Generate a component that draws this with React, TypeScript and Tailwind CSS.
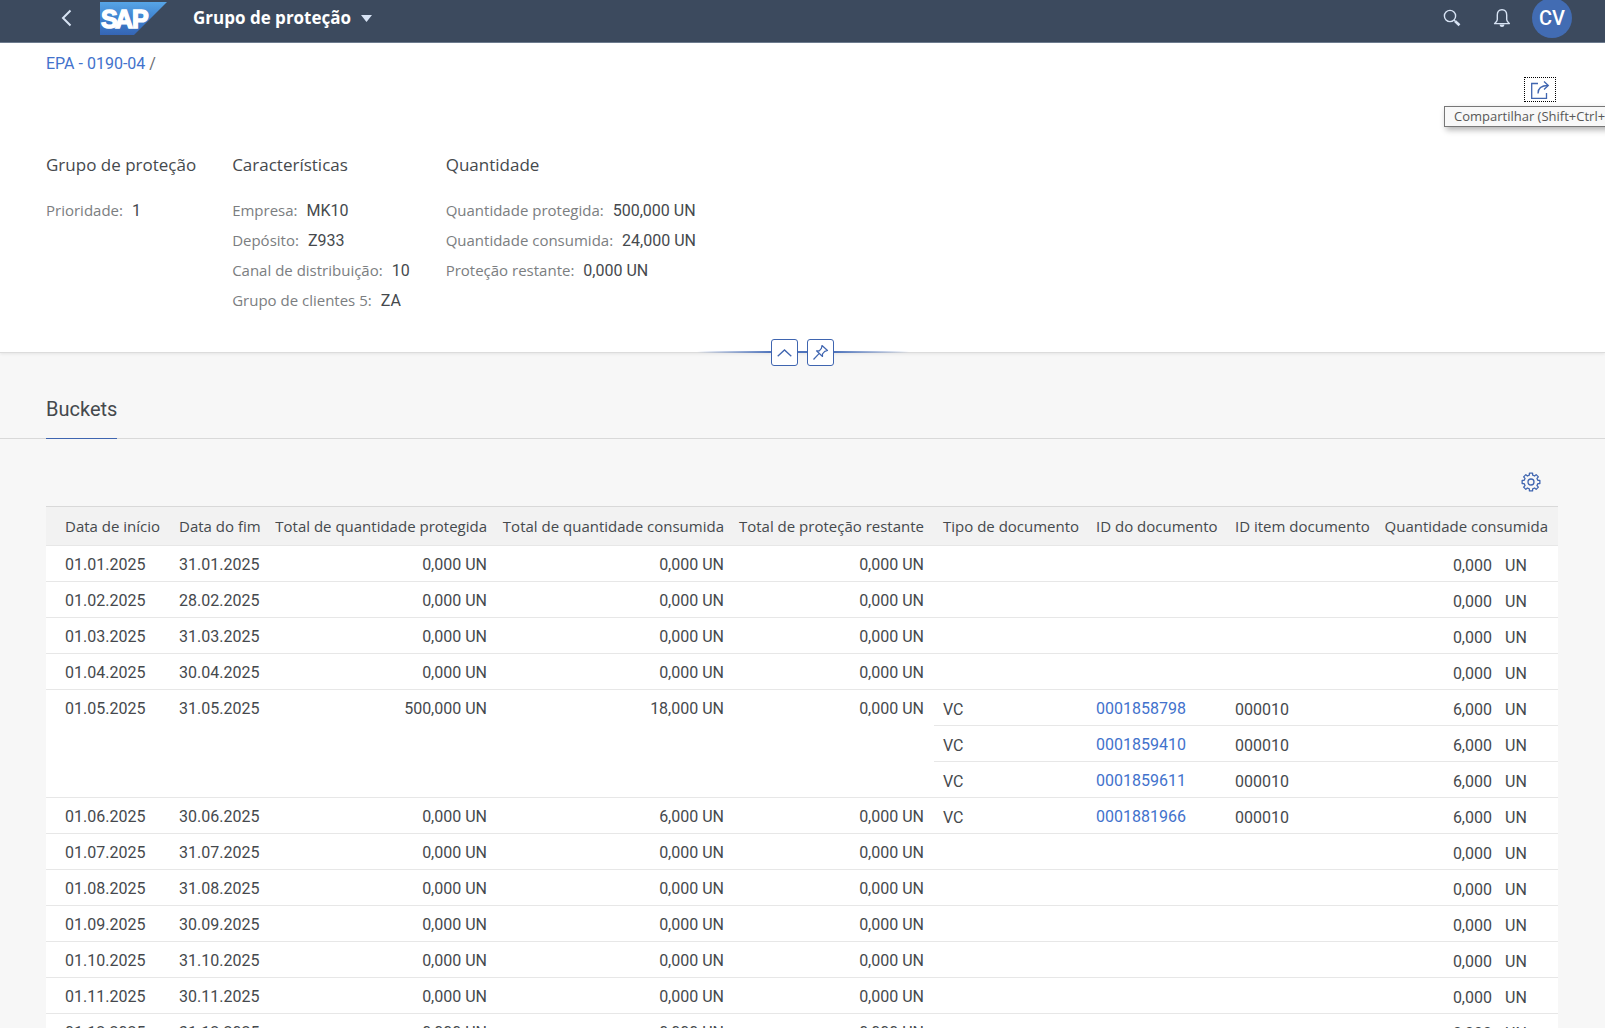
import { Fragment } from "react";
import clsx from "clsx";

type DocItem = { type: string; id: string; item: string; qty: string };
type Bucket = {
  start: string;
  end: string;
  protectedQty: string;
  consumedQty: string;
  remaining: string;
  docs?: DocItem[];
};

const zero = { protectedQty: "0,000 UN", consumedQty: "0,000 UN", remaining: "0,000 UN" };

const buckets: Bucket[] = [
  { start: "01.01.2025", end: "31.01.2025", ...zero },
  { start: "01.02.2025", end: "28.02.2025", ...zero },
  { start: "01.03.2025", end: "31.03.2025", ...zero },
  { start: "01.04.2025", end: "30.04.2025", ...zero },
  {
    start: "01.05.2025",
    end: "31.05.2025",
    protectedQty: "500,000 UN",
    consumedQty: "18,000 UN",
    remaining: "0,000 UN",
    docs: [
      { type: "VC", id: "0001858798", item: "000010", qty: "6,000" },
      { type: "VC", id: "0001859410", item: "000010", qty: "6,000" },
      { type: "VC", id: "0001859611", item: "000010", qty: "6,000" },
    ],
  },
  {
    start: "01.06.2025",
    end: "30.06.2025",
    protectedQty: "0,000 UN",
    consumedQty: "6,000 UN",
    remaining: "0,000 UN",
    docs: [{ type: "VC", id: "0001881966", item: "000010", qty: "6,000" }],
  },
  { start: "01.07.2025", end: "31.07.2025", ...zero },
  { start: "01.08.2025", end: "31.08.2025", ...zero },
  { start: "01.09.2025", end: "30.09.2025", ...zero },
  { start: "01.10.2025", end: "31.10.2025", ...zero },
  { start: "01.11.2025", end: "30.11.2025", ...zero },
  { start: "01.12.2025", end: "31.12.2025", ...zero },
];

const columns = [
  { label: "Data de início", col: "w-[124px]", cell: "pl-[19px]" },
  { label: "Data do fim", col: "w-[100px]", cell: "pl-[9px]" },
  { label: "Total de quantidade protegida", col: "w-[227px]", cell: "pr-[10px] text-right" },
  { label: "Total de quantidade consumida", col: "w-[237px]", cell: "pr-[10px] text-right" },
  { label: "Total de proteção restante", col: "w-[200px]", cell: "pr-[10px] text-right" },
  { label: "Tipo de documento", col: "w-[153px]", cell: "pl-[9px]" },
  { label: "ID do documento", col: "w-[139px]", cell: "pl-[9px]" },
  { label: "ID item documento", col: "w-[152px]", cell: "pl-[9px]" },
  { label: "Quantidade consumida", col: "w-[180px]", cell: "pr-[10px] text-right" },
];

const facets = [
  { title: "Grupo de proteção", fields: [["Prioridade:", "1"]] },
  {
    title: "Características",
    fields: [
      ["Empresa:", "MK10"],
      ["Depósito:", "Z933"],
      ["Canal de distribuição:", "10"],
      ["Grupo de clientes 5:", "ZA"],
    ],
  },
  {
    title: "Quantidade",
    fields: [
      ["Quantidade protegida:", "500,000 UN"],
      ["Quantidade consumida:", "24,000 UN"],
      ["Proteção restante:", "0,000 UN"],
    ],
  },
];

const cellBase = "h-9 border-b border-[#e7e7e7] bg-white align-top leading-6 whitespace-nowrap";
const cellText = "pt-[7px] pb-1";
// Document cells sit slightly lower than the totals and links
const cellDoc = "pt-2 pb-[3px]";

// Eight flat teeth around a ring
const gearPath =
  Array.from({ length: 8 }, (_, i) => {
    const at = (deg: number, r: number) => {
      const a = ((i * 45 + deg) * Math.PI) / 180;
      return `${(10 + r * Math.sin(a)).toFixed(2)} ${(10 - r * Math.cos(a)).toFixed(2)}`;
    };
    return `${i ? "L" : "M"}${at(-14, 7)}L${at(-10, 9)}L${at(10, 9)}L${at(14, 7)}`;
  }).join("") + "Z";

function SapLogo() {
  return (
    <svg className="h-[33px] w-[67px]" viewBox="0 0 67 33" role="img" aria-label="SAP">
      <defs>
        <linearGradient id="sap" x1="0" y1="0" x2="0" y2="1">
          <stop offset="0" stopColor="#57a5e6" />
          <stop offset="0.5" stopColor="#3f82cf" />
          <stop offset="1" stopColor="#3565b5" />
        </linearGradient>
      </defs>
      <path d="M0 0H67L34 33H0Z" fill="url(#sap)" />
      <text y="26" fill="#fff" stroke="#fff" strokeWidth="1.400" fontFamily="Liberation Sans, sans-serif" fontWeight="700" fontSize="25">
        <tspan x="1">S</tspan>
        <tspan x="15">A</tspan>
        <tspan x="32">P</tspan>
      </text>
    </svg>
  );
}

function ShellHeader() {
  return (
    <header className="flex h-[43px] items-center border-b border-[#6f7d90] bg-[#3c4a5e] pr-[33px] pb-[6px] pl-[55px] text-[#d7e3f4]">
      <button type="button" aria-label="Voltar" className="flex w-[22px] justify-center">
        <svg className="h-[18px] w-3" viewBox="0 0 12 18" fill="none" stroke="currentColor" strokeWidth="2">
          <path d="M10.500 1.500L3 9L10.500 16.500" />
        </svg>
      </button>
      <a href="#" className="ml-[23px]">
        <SapLogo />
      </a>
      <button type="button" className="ml-[26px] flex items-center gap-[10px] font-['Open_Sans',sans-serif] text-[17px] leading-6 font-bold text-white">
        Grupo de proteção
        <svg className="h-[7px] w-[11px]" viewBox="0 0 11 7" fill="#d7e3f4">
          <path d="M0 0H11L5.500 7Z" />
        </svg>
      </button>
      <div className="ml-auto flex items-center">
        <button type="button" aria-label="Procurar">
          <svg className="size-[18px]" viewBox="0 0 18 18" fill="none" stroke="currentColor">
            <circle cx="7" cy="7" r="5.600" strokeWidth="1.400" />
            <path d="M11 11L12.500 12.500" strokeWidth="1.400" />
            <path d="M12.200 12.200L16.500 16.200" strokeWidth="2.600" />
          </svg>
        </button>
        <button type="button" aria-label="Notificações" className="ml-[31px]">
          <svg className="size-5" viewBox="0 0 20 20" fill="none" stroke="currentColor" strokeWidth="1.400" strokeLinejoin="round">
            <path d="M10 1.600C7 1.800 5.300 4 5.300 7V11.500C5.300 13 4 14 2.600 15.600H17.400C16 14 14.700 13 14.700 11.500V7C14.700 4 13 1.800 10 1.600Z" />
            <path d="M7.500 16.500H12.500C12.300 18.200 11.300 19 10 19S7.700 18.200 7.500 16.500Z" fill="currentColor" stroke="none" />
          </svg>
        </button>
        <button type="button" aria-label="Perfil" className="ml-5 size-10 rounded-full bg-[#426cb3] font-['Roboto',sans-serif] text-xl font-medium text-white">
          CV
        </button>
      </div>
    </header>
  );
}

function ObjectHeader() {
  return (
    <section className="relative border-b border-[#dcdcdc] bg-white px-[46px] pt-[9px] pb-[37px] shadow-[0_1px_3px_rgba(0,0,0,0.08)]">
      <nav aria-label="Trilha" className="leading-6">
        <a href="#" className="text-[#4272cc]">EPA - 0190-04</a>
        <span className="text-[#6a6d70]"> /</span>
      </nav>
      <div className="mt-px flex justify-end pr-[3px]">
        <div className="relative">
          <button type="button" aria-label="Compartilhar" className="flex h-[25px] w-8 items-center justify-center border border-dotted border-black text-[#3f65b0]">
            <svg className="size-5" viewBox="0 0 20 20" fill="none" stroke="currentColor" strokeWidth="1.300">
              <path d="M8 3.500H1.700V18.300H16.500V13" />
              <path d="M8 13.500C8 8.500 11 5.500 18 5.500" />
              <path d="M14 1.500L18.300 5.500L14 9.500" />
            </svg>
          </button>
          <div role="tooltip" className="absolute top-full left-[-80px] z-10 mt-1 h-[21px] border border-[#777] bg-[#f8f8f8] px-[9px] font-['Open_Sans',sans-serif] text-[13px] leading-[18px] whitespace-nowrap text-[#575757] shadow-[2px_3px_6px_rgba(0,0,0,0.3)]">
            Compartilhar (Shift+Ctrl+S)
          </div>
        </div>
      </div>
      <div className="mt-[51px] flex gap-9">
        {facets.map((facet) => (
          <div key={facet.title}>
            <h2 className="mb-[18px] font-['Open_Sans',sans-serif] text-[17px] leading-6 text-[#45494d]">{facet.title}</h2>
            <dl>
              {facet.fields.map(([label, value]) => (
                <div key={label} className="flex h-[30px] items-baseline gap-[9px] leading-[30px] whitespace-nowrap">
                  <dt className="font-['Open_Sans',sans-serif] text-[15px] text-[#7b7e81]">{label}</dt>
                  <dd className="text-[#45494d]">{value}</dd>
                </div>
              ))}
            </dl>
          </div>
        ))}
      </div>
      {/* Collapse / pin controls sit on the bottom edge */}
      <div className="absolute bottom-[-14px] left-1/2 flex w-[212px] -translate-x-1/2 justify-center gap-[9px]">
        <div className="absolute inset-x-0 top-[12px] h-[2px] bg-[linear-gradient(to_right,transparent,#4f74bc_35%,#4f74bc_65%,transparent)]" />
        <button type="button" aria-label="Recolher cabeçalho" className="relative flex size-[27px] items-center justify-center rounded-[3px] border border-[#3f65b0] bg-white text-[#3f65b0]">
          <svg className="h-2 w-[15px]" viewBox="0 0 15 8" fill="none" stroke="currentColor" strokeWidth="1.300">
            <path d="M0.700 7.300L7.500 1L14.300 7.300" />
          </svg>
        </button>
        <button type="button" aria-label="Fixar cabeçalho" className="relative flex size-[27px] items-center justify-center rounded-[3px] border border-[#3f65b0] bg-white text-[#3f65b0]">
          <svg className="size-[17px]" viewBox="0 0 17 17" fill="none" stroke="currentColor" strokeWidth="1.200" strokeLinejoin="round">
            <path d="M10 1.500L15.500 6.500L12.800 7.400L10.500 9.800V12.500L4.500 6.800H7.300L9.400 4.300Z" />
            <path d="M7 9.700L1.500 15.500" />
          </svg>
        </button>
      </div>
    </section>
  );
}

function BucketRows({ bucket }: { bucket: Bucket }) {
  const lines: (DocItem | null)[] = bucket.docs ?? [null];
  const totals = [bucket.start, bucket.end, bucket.protectedQty, bucket.consumedQty, bucket.remaining];
  return (
    <Fragment>
      {lines.map((doc, i) => (
        <tr key={i}>
          {i === 0 &&
            totals.map((value, c) => (
              <td key={c} rowSpan={lines.length} className={clsx(cellBase, cellText, columns[c].cell)}>
                {value}
              </td>
            ))}
          <td className={clsx(cellBase, cellDoc, columns[5].cell)}>{doc?.type}</td>
          <td className={clsx(cellBase, cellText, columns[6].cell)}>
            {doc && <a href="#" className="text-[#4272cc]">{doc.id}</a>}
          </td>
          <td className={clsx(cellBase, cellDoc, columns[7].cell)}>{doc?.item}</td>
          <td className={clsx(cellBase, cellDoc, columns[8].cell)}>
            <div className="flex justify-end">
              <span>{doc?.qty ?? "0,000"}</span>
              <span className="w-14 pl-[13px] text-left">UN</span>
            </div>
          </td>
        </tr>
      ))}
    </Fragment>
  );
}

export default function App() {
  return (
    <div className="h-screen overflow-hidden bg-white pb-[7px] font-['Roboto',sans-serif] text-base text-[#45494d]">
      <div className="flex h-full flex-col overflow-hidden bg-[#f7f7f7]">
        <ShellHeader />
        <ObjectHeader />
        <nav className="border-b border-[#d9d9d9] px-[46px] pt-[42px]">
          <a href="#" aria-current="true" className="-mb-px inline-block border-b border-[#3f65b0] pb-[15px] align-top text-xl leading-7">
            Buckets
          </a>
        </nav>
        <main className="pr-[47px] pl-[46px]">
          <div className="flex justify-end pt-[33px] pr-[17px] pb-[14px]">
            <button type="button" aria-label="Configurações" className="text-[#3f65b0]">
              <svg className="size-5" viewBox="0 0 20 20" fill="none" stroke="currentColor" strokeWidth="1.300" strokeLinejoin="round">
                <path d={gearPath} />
                <circle cx="10" cy="10" r="3" />
              </svg>
            </button>
          </div>
          <table className="w-full table-fixed border-separate border-spacing-0">
            <colgroup>
              {columns.map((c) => (
                <col key={c.label} className={c.col} />
              ))}
            </colgroup>
            <thead>
              <tr>
                {columns.map((c) => (
                  <th
                    key={c.label}
                    scope="col"
                    className={clsx(
                      "h-10 border-t border-b border-t-[#d9d9d9] border-b-[#e7e7e7] bg-[#f2f2f2] font-['Open_Sans',sans-serif] text-[15px] font-normal whitespace-nowrap",
                      c.cell,
                      !c.cell.includes("text-right") && "text-left"
                    )}
                  >
                    {c.label}
                  </th>
                ))}
              </tr>
            </thead>
            <tbody>
              {buckets.map((b) => (
                <BucketRows key={b.start} bucket={b} />
              ))}
            </tbody>
          </table>
        </main>
      </div>
    </div>
  );
}
